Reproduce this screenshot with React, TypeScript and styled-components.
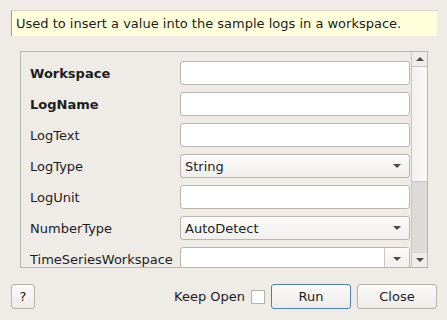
import React from "react";
import styled, { createGlobalStyle } from "styled-components";

const GlobalStyle = createGlobalStyle`
  html, body {
    margin: 0;
    padding: 0;
    background: #efebe7;
    font-family: "DejaVu Sans", "Liberation Sans", sans-serif;
    font-size: 13px;
    color: #1d1d1d;
  }
`;

const Dialog = styled.div`
  width: 447px;
  height: 320px;
  box-sizing: border-box;
  padding: 10px 10px 0 11px;
  display: flex;
  flex-direction: column;
`;

const Description = styled.div`
  height: 26px;
  box-sizing: border-box;
  background: #ffffdc;
  border-left: 1px solid #a09e9b;
  border-top: 1px solid #d8d6cf;
  padding: 0 0 0 4px;
  display: flex;
  align-items: center;
`;

const Frame = styled.div`
  margin: 15px 9px 0 9px;
  height: 217px;
  box-sizing: border-box;
  border: 1px solid #b8b4ae;
  display: flex;
  overflow: hidden;
`;

const Content = styled.div`
  flex: 1;
  overflow: hidden;
  padding: 9px 1px 0 9px;
  display: flex;
  flex-direction: column;
  gap: 7px;
`;

const Row = styled.div`
  display: flex;
  align-items: center;
  height: 24px;
  flex-shrink: 0;
`;

const Label = styled.div<{ $bold?: boolean }>`
  width: 150px;
  font-weight: ${(p) => (p.$bold ? "bold" : "normal")};
  white-space: nowrap;
`;

const TextInput = styled.div`
  flex: 1;
  height: 24px;
  box-sizing: border-box;
  background: #ffffff;
  border: 1px solid #b9b5af;
  border-radius: 3px;
`;

const Combo = styled.div<{ $editable?: boolean }>`
  flex: 1;
  height: 24px;
  box-sizing: border-box;
  border: 1px solid #b9b5af;
  border-radius: 3px;
  background: ${(p) =>
    p.$editable ? "#ffffff" : "linear-gradient(#fcfbfa, #f1efec)"};
  display: flex;
  align-items: center;
  padding-left: 4px;
`;

const ComboText = styled.span`
  flex: 1;
`;

const ArrowBox = styled.div<{ $sep?: boolean }>`
  width: 24px;
  align-self: stretch;
  display: flex;
  align-items: center;
  justify-content: center;
  border-left: ${(p) => (p.$sep ? "1px solid #c9c6c1" : "none")};
  background: ${(p) => (p.$sep ? "linear-gradient(#fcfbfa, #f1efec)" : "transparent")};
`;

const Arrow = ({ up }: { up?: boolean }) => (
  <svg width="8" height="4" viewBox="0 0 8 4">
    <path d={up ? "M0 4 L4 0 L8 4 Z" : "M0 0 L8 0 L4 4 Z"} fill="#4a4a48" />
  </svg>
);

const ScrollBar = styled.div`
  width: 15px;
  display: flex;
  flex-direction: column;
  border-left: 1px solid #c9c6c1;
  background: #dddbd7;
`;

const ScrollButton = styled.div`
  height: 14px;
  display: flex;
  align-items: center;
  justify-content: center;
  background: #efedea;
`;

const Handle = styled.div`
  height: 116px;
  box-sizing: border-box;
  border-top: 1px solid #c9c6c1;
  border-bottom: 1px solid #c9c6c1;
  background: linear-gradient(90deg, #f3f1ee, #fbfaf9);
`;

const Track = styled.div`
  flex: 1;
`;

const ButtonBar = styled.div`
  margin-top: 16px;
  display: flex;
  align-items: center;
  gap: 6px;
`;

const Button = styled.button<{ $w: number; $default?: boolean }>`
  width: ${(p) => p.$w}px;
  height: 25px;
  box-sizing: border-box;
  border: 1px solid ${(p) => (p.$default ? "#4f80ad" : "#b5b1ab")};
  border-radius: 3px;
  background: linear-gradient(#fbfaf9, #eeece9);
  font-family: inherit;
  font-size: 13px;
  color: #1d1d1d;
  padding: 0;
`;

const Spacer = styled.div`
  flex: 1;
`;

const Check = styled.div`
  width: 14px;
  height: 14px;
  box-sizing: border-box;
  border: 1px solid #b5b1ab;
  background: #ffffff;
`;

type Field =
  | { label: string; bold?: boolean; kind: "text" }
  | { label: string; bold?: boolean; kind: "combo"; value: string }
  | { label: string; bold?: boolean; kind: "edit" };

const fields: Field[] = [
  { label: "Workspace", bold: true, kind: "text" },
  { label: "LogName", bold: true, kind: "text" },
  { label: "LogText", kind: "text" },
  { label: "LogType", kind: "combo", value: "String" },
  { label: "LogUnit", kind: "text" },
  { label: "NumberType", kind: "combo", value: "AutoDetect" },
  { label: "TimeSeriesWorkspace", kind: "edit" },
];

export default function App() {
  return (
    <>
      <GlobalStyle />
      <Dialog>
        <Description>Used to insert a value into the sample logs in a workspace.</Description>
        <Frame>
          <Content>
            {fields.map((f) => (
              <Row key={f.label}>
                <Label $bold={f.bold}>{f.label}</Label>
                {f.kind === "text" && <TextInput />}
                {f.kind === "combo" && (
                  <Combo>
                    <ComboText>{f.value}</ComboText>
                    <ArrowBox>
                      <Arrow />
                    </ArrowBox>
                  </Combo>
                )}
                {f.kind === "edit" && (
                  <Combo $editable>
                    <ComboText />
                    <ArrowBox $sep>
                      <Arrow />
                    </ArrowBox>
                  </Combo>
                )}
              </Row>
            ))}
          </Content>
          <ScrollBar>
            <ScrollButton>
              <Arrow up />
            </ScrollButton>
            <Handle />
            <Track />
            <ScrollButton>
              <Arrow />
            </ScrollButton>
          </ScrollBar>
        </Frame>
        <ButtonBar>
          <Button $w={24}>?</Button>
          <Spacer />
          <span>Keep Open</span>
          <Check />
          <Button $w={80} $default>
            Run
          </Button>
          <Button $w={80}>Close</Button>
        </ButtonBar>
      </Dialog>
    </>
  );
}
